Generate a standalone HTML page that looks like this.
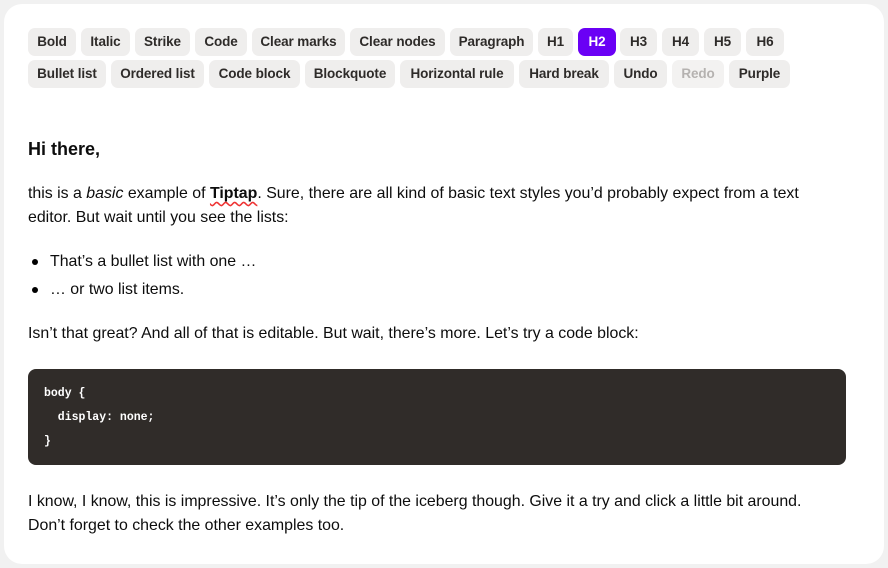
<!DOCTYPE html>
<html><head><meta charset="utf-8"><style>
*{box-sizing:border-box;margin:0;padding:0}
html,body{width:888px;height:568px;overflow:hidden;background:#f1f1f1;font-family:"Liberation Sans",sans-serif;color:#000}
.card{position:absolute;left:4px;top:4px;width:880px;height:560px;background:#fff;border-radius:18px}
.b{position:absolute;height:28px;line-height:28px;text-align:center;background:#efeeed;border-radius:7px;font-size:13.5px;font-weight:bold;color:#2e2b29;letter-spacing:-0.1px;white-space:nowrap}
.b.on{background:#6a00f5;color:#fff}
.b.dis{color:#b5b2b0;background:#f3f2f1}
.t{position:absolute;left:28px;font-size:15.9px;line-height:24px;white-space:nowrap;color:#0d0d0d}
.code{position:absolute;left:28px;top:369px;width:818px;height:96px;background:#302c29;border-radius:8px;color:#fff;font-family:"Liberation Mono",monospace;font-weight:bold;font-size:11.5px;line-height:24px;padding:13px 16px;white-space:pre}
.dot{position:absolute;left:32px;width:6px;height:6px;border-radius:50%;background:#000}
u{text-decoration:underline wavy #e33;text-underline-offset:3px}
</style></head><body>
<div class="card"></div>
<div class="b" style="left:28px;top:28px;width:48px">Bold</div>
<div class="b" style="left:81px;top:28px;width:49px">Italic</div>
<div class="b" style="left:135px;top:28px;width:55px">Strike</div>
<div class="b" style="left:195px;top:28px;width:52px">Code</div>
<div class="b" style="left:252px;top:28px;width:93px">Clear marks</div>
<div class="b" style="left:350px;top:28px;width:95px">Clear nodes</div>
<div class="b" style="left:450px;top:28px;width:83px">Paragraph</div>
<div class="b" style="left:538px;top:28px;width:35px">H1</div>
<div class="b on" style="left:578px;top:28px;width:38px">H2</div>
<div class="b" style="left:620px;top:28px;width:37px">H3</div>
<div class="b" style="left:662px;top:28px;width:37px">H4</div>
<div class="b" style="left:704px;top:28px;width:37px">H5</div>
<div class="b" style="left:746px;top:28px;width:38px">H6</div>
<div class="b" style="left:28px;top:60px;width:78px">Bullet list</div>
<div class="b" style="left:111px;top:60px;width:93px">Ordered list</div>
<div class="b" style="left:209px;top:60px;width:91px">Code block</div>
<div class="b" style="left:305px;top:60px;width:90px">Blockquote</div>
<div class="b" style="left:400px;top:60px;width:114px">Horizontal rule</div>
<div class="b" style="left:519px;top:60px;width:90px">Hard break</div>
<div class="b" style="left:614px;top:60px;width:53px">Undo</div>
<div class="b dis" style="left:672px;top:60px;width:52px">Redo</div>
<div class="b" style="left:729px;top:60px;width:61px">Purple</div>

<div class="t" style="top:136px;font-size:18px;font-weight:bold;line-height:26px">Hi there,</div>
<div class="t" style="top:182px">this is a <i>basic</i> example of <b><u>Tiptap</u></b>. Sure, there are all kind of basic text styles you’d probably expect from a text<br>editor. But wait until you see the lists:</div>
<div class="dot" style="top:259px"></div>
<div class="t" style="left:50px;top:250px">That’s a bullet list with one …</div>
<div class="dot" style="top:287px"></div>
<div class="t" style="left:50px;top:278px">… or two list items.</div>
<div class="t" style="top:322px">Isn’t that great? And all of that is editable. But wait, there’s more. Let’s try a code block:</div>
<div class="code">body {
  display: none;
}</div>
<div class="t" style="top:490px">I know, I know, this is impressive. It’s only the tip of the iceberg though. Give it a try and click a little bit around.<br>Don’t forget to check the other examples too.</div>
</body></html>
